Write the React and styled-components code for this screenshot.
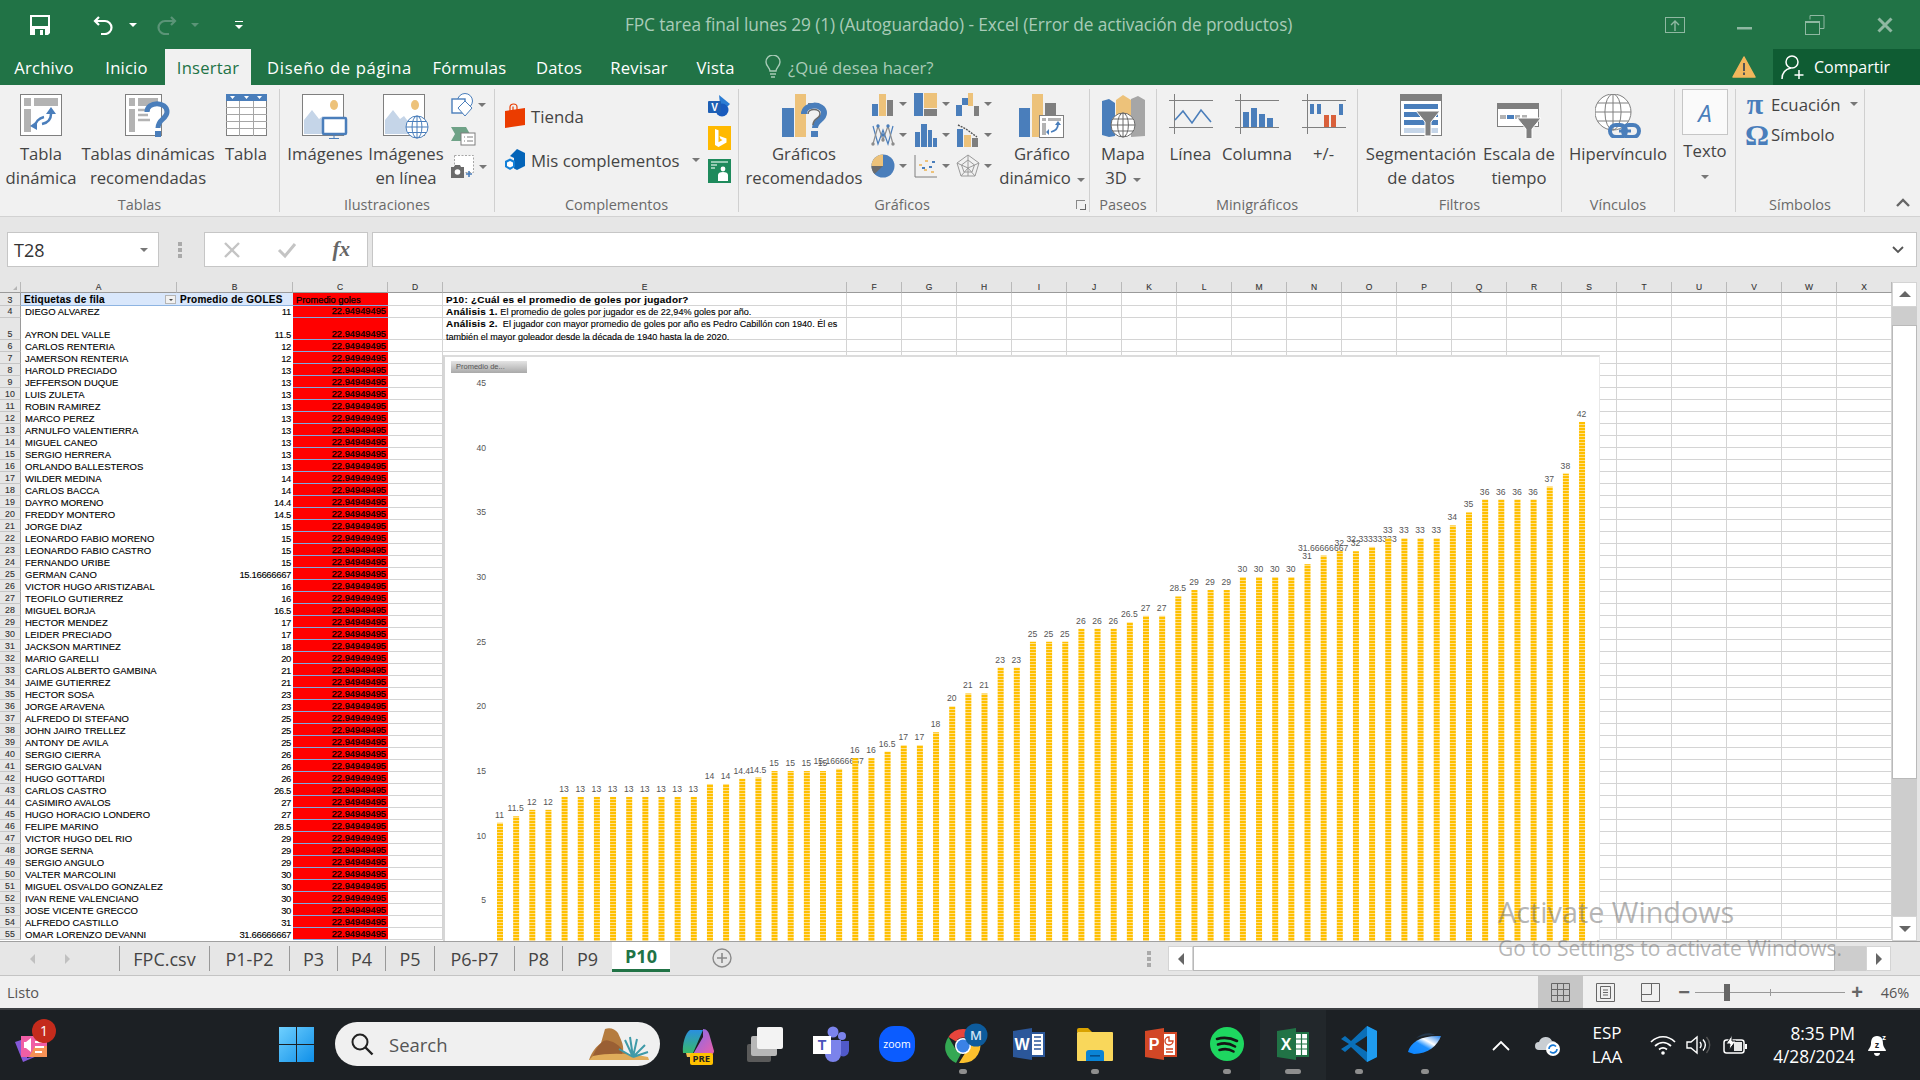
import styled, { createGlobalStyle, css } from "styled-components";

const UI = `"Open Sans", "Noto Sans", sans-serif`;
const CELL = `"Liberation Sans", Arial, sans-serif`;
const BLUE = "#4a7ebb";
const TAN = "#edc27a";
const GRAY = "#7f7f7f";

const TABS = [
	["Archivo", 88],
	["Inicio", 77],
	["Insertar", 86],
	["Diseño de página", 177, 0.7],
	["Fórmulas", 83],
	["Datos", 96],
	["Revisar", 64],
	["Vista", 89],
];
const COLUMNS = ["A", "B", "C", "D", "E", "F", "G", "H", "I", "J", "K", "L", "M", "N", "O", "P", "Q", "R", "S", "T", "U", "V", "W", "X"];
const SHEETS = [
	["FPC.csv", 90],
	["P1-P2", 80],
	["P3", 48],
	["P4", 48],
	["P5", 49],
	["P6-P7", 80],
	["P8", 48],
	["P9", 50],
];

const PLAYERS = [
	["DIEGO ALVAREZ", "11"],
	["AYRON DEL VALLE", "11.5"],
	["CARLOS RENTERIA", "12"],
	["JAMERSON RENTERIA", "12"],
	["HAROLD PRECIADO", "13"],
	["JEFFERSON DUQUE", "13"],
	["LUIS ZULETA", "13"],
	["ROBIN RAMIREZ", "13"],
	["MARCO PEREZ", "13"],
	["ARNULFO VALENTIERRA", "13"],
	["MIGUEL CANEO", "13"],
	["SERGIO HERRERA", "13"],
	["ORLANDO BALLESTEROS", "13"],
	["WILDER MEDINA", "14"],
	["CARLOS BACCA", "14"],
	["DAYRO MORENO", "14.4"],
	["FREDDY MONTERO", "14.5"],
	["JORGE DIAZ", "15"],
	["LEONARDO FABIO MORENO", "15"],
	["LEONARDO FABIO CASTRO", "15"],
	["FERNANDO URIBE", "15"],
	["GERMAN CANO", "15.16666667"],
	["VICTOR HUGO ARISTIZABAL", "16"],
	["TEOFILO GUTIERREZ", "16"],
	["MIGUEL BORJA", "16.5"],
	["HECTOR MENDEZ", "17"],
	["LEIDER PRECIADO", "17"],
	["JACKSON MARTINEZ", "18"],
	["MARIO GARELLI", "20"],
	["CARLOS ALBERTO GAMBINA", "21"],
	["JAIME GUTIERREZ", "21"],
	["HECTOR SOSA", "23"],
	["JORGE ARAVENA", "23"],
	["ALFREDO DI STEFANO", "25"],
	["JOHN JAIRO TRELLEZ", "25"],
	["ANTONY DE AVILA", "25"],
	["SERGIO CIERRA", "26"],
	["SERGIO GALVAN", "26"],
	["HUGO GOTTARDI", "26"],
	["CARLOS CASTRO", "26.5"],
	["CASIMIRO AVALOS", "27"],
	["HUGO HORACIO LONDERO", "27"],
	["FELIPE MARINO", "28.5"],
	["VICTOR HUGO DEL RIO", "29"],
	["JORGE SERNA", "29"],
	["SERGIO ANGULO", "29"],
	["VALTER MARCOLINI", "30"],
	["MIGUEL OSVALDO GONZALEZ", "30"],
	["IVAN RENE VALENCIANO", "30"],
	["JOSE VICENTE GRECCO", "30"],
	["ALFREDO CASTILLO", "31"],
	["OMAR LORENZO DEVANNI", "31.66666667"],
];

const BARS = [
	...PLAYERS.map((p) => p[1]),
	"32", "32", "32.33333333", "33", "33", "33", "33", "34", "35", "36", "36", "36", "36", "37", "38", "42",
];

// small helpers for the drawn ribbon icons
const Svg = ({ w, h, children }) => (
	<svg width={w} height={h} viewBox={`0 0 ${w} ${h}`}>
		{children}
	</svg>
);

const Globe = ({ cx, cy, r, color = "#808080", fill = "#fff" }) => (
	<g fill="none" stroke={color} strokeWidth="1">
		<circle cx={cx} cy={cy} r={r} fill={fill} />
		<ellipse cx={cx} cy={cy} rx={r * 0.45} ry={r} />
		<path d={`M${cx} ${cy - r}V${cy + r}M${cx - r} ${cy}H${cx + r}M${cx - r * 0.85} ${cy - r * 0.5}H${cx + r * 0.85}M${cx - r * 0.85} ${cy + r * 0.5}H${cx + r * 0.85}`} />
	</g>
);

const PivotIcon = () => (
	<Svg w={42} h={42}>
		<rect x=".5" y=".5" width="41" height="41" fill="#fff" stroke={GRAY} />
		<path d="M4 4h7v8H4zM14 4h24v8H14zM4 15h7v23H4z" fill="#b3b3b3" />
		<path d="M31 20c0 6-4 9-9 10M15 33c0-5 4-9 9-10" fill="none" stroke={BLUE} strokeWidth="2.5" />
		<path d="M31 13l5 7h-10zM17 36l-7-4 7-5z" fill={BLUE} />
	</Svg>
);

const RecommendedPivotIcon = () => (
	<Svg w={46} h={44}>
		<rect x=".5" y=".5" width="36" height="41" fill="#fff" stroke={GRAY} />
		<path d="M4 4h6v8H4zM13 4h20v8H13zM4 15h6v23H4z" fill="#b3b3b3" />
		<path d="M13 16h12M13 21h10M13 26h12" stroke="#b3b3b3" strokeWidth="2.5" />
		<path d="M22 18c0-11 20-11 20 0 0 7-9 7-9 16" fill="none" stroke={BLUE} strokeWidth="5" />
		<rect x="30" y="37" width="6" height="6" fill={BLUE} />
	</Svg>
);

const TableIcon = () => (
	<Svg w={41} h={42}>
		<rect x=".5" y=".5" width="40" height="41" fill="#fff" stroke={GRAY} />
		<rect width="41" height="7" fill={BLUE} />
		<path d="M4 2h5l-2.500 3zM18 2h5l-2.500 3zM31 2h5l-2.500 3z" fill="#fff" />
		<path d="M0 13.500h41M0 20.500h41M0 27.500h41M0 34.500h41M13.500 7v35M27.500 7v35" stroke="#a6a6a6" />
	</Svg>
);

const PictureBase = () => (
	<>
		<rect x=".5" y=".5" width="41" height="41" fill="#fff" stroke={GRAY} />
		<ellipse cx="32" cy="11" rx="4" ry="5" fill={TAN} />
		<path d="M2 40V26l8-10 7 9 4-3 6 8v10z" fill="#c5d5e8" />
	</>
);

const PicturesIcon = () => (
	<Svg w={46} h={46}>
		<PictureBase />
		<rect x="21" y="24" width="23" height="16" rx="1" fill="#fff" stroke={BLUE} strokeWidth="2.5" />
		<path d="M32 41v3M27 44.500h10" stroke={BLUE} />
	</Svg>
);

const OnlinePicturesIcon = () => (
	<Svg w={46} h={46}>
		<PictureBase />
		<Globe cx={34} cy={33} r={11} color={BLUE} />
	</Svg>
);

const ShapesIcon = () => (
	<Svg w={24} h={24}>
		<circle cx="14" cy="8" r="7.500" fill="#fff" stroke={BLUE} />
		<rect x="1" y="6" width="13" height="14" fill="#fff" stroke={BLUE} strokeWidth="1.4" />
		<path d="M14 8l7 7-7 8-7-8z" fill="#fff" stroke={BLUE} />
	</Svg>
);

const SmartArtIcon = () => (
	<Svg w={25} h={20}>
		<path d="M0 1h15l4 7-4 7H0l4-7z" fill="#6fa287" />
		<rect x="10" y="7" width="14" height="12" fill="#fff" stroke={GRAY} />
		<path d="M13 11h1M16 11h6M13 15h1M16 15h6" stroke={GRAY} />
	</Svg>
);

const ScreenshotIcon = () => (
	<Svg w={25} h={24}>
		<rect x="3.500" y=".5" width="19" height="17" fill="#fff" stroke="#a6a6a6" strokeDasharray="2 1.5" />
		<path d="M0 12h3l1-2h5l1 2h3v11H0z" fill="#6b6b6b" />
		<circle cx="6.500" cy="17" r="2.800" fill="#fff" />
		<path d="M18 16v6M15 19h6" stroke={BLUE} strokeWidth="1.6" />
	</Svg>
);

const StoreIcon = () => (
	<Svg w={21} h={26}>
		<path d="M0 8l20-3v17L0 25z" fill="#eb3c00" />
		<path d="M5 8V4c0-4 7-4 7 0v3M8 7V3.500" fill="none" stroke="#eb3c00" strokeWidth="1.2" />
	</Svg>
);

const AddinsIcon = () => (
	<Svg w={21} h={22}>
		<path d="M12 0l8 4v13l-8 4-3-1.500V9L5 7z" fill="#0364b8" />
		<path d="M5 9.500l5 2.500v6l-5 3-5-3v-6z" fill="#1380d8" />
		<path d="M5 12l3 1.500v3.500l-3 1.500-3-1.500v-3.500z" fill="#fff" />
	</Svg>
);

const VisioIcon = () => (
	<Svg w={23} h={22}>
		<path d="M11 0l11 9-9 9z" fill="#2b7cd3" />
		<circle cx="14" cy="15" r="6.500" fill="#185abd" />
		<rect y="6" width="13" height="12" rx="1" fill="#1e5fb4" />
		<text x="6.500" y="16" fill="#fff" fontFamily={CELL} fontWeight="700" fontSize="10" textAnchor="middle">V</text>
	</Svg>
);

const BingIcon = () => (
	<Svg w={23} h={24}>
		<rect width="23" height="24" fill="#ffb900" />
		<path d="M7 3l3.500 1.200v12l4-2.200-2-1-1-3 7 2.400v4L10.500 21 7 19z" fill="#fff" />
	</Svg>
);

const PeopleGraphIcon = () => (
	<Svg w={23} h={24}>
		<rect width="23" height="24" fill="#1e8a5c" />
		<path d="M3 3h17M3 6h6M3 9h4" stroke="#b9e0cd" strokeWidth="1.4" />
		<circle cx="15" cy="10" r="2.400" fill="#fff" />
		<path d="M10 22v-6c0-2 2-3 5-3s5 1 5 3v6z" fill="#fff" />
	</Svg>
);

const RecommendedChartIcon = () => (
	<Svg w={45} h={44}>
		<rect y="14" width="12" height="29" fill={BLUE} />
		<rect x="13" y="0" width="11" height="43" fill={TAN} />
		<rect x="26" y="9" width="11" height="4" fill={GRAY} />
		<path d="M22 20c0-11 20-11 20-1 0 7-9 7-9 15" fill="none" stroke={BLUE} strokeWidth="6" />
		<path d="M26 20c0-6 12-6 12 0 0 5-7 4-7 11" fill="none" stroke="#6b6b6b" strokeWidth="1.5" />
		<rect x="29" y="37" width="7" height="6" fill={BLUE} />
	</Svg>
);

const ColumnMini = () => (
	<Svg w={24} h={24}>
		<rect x="1" y="12" width="6" height="12" fill={BLUE} />
		<rect x="8" y="2" width="7" height="22" fill={TAN} />
		<rect x="16" y="8" width="6" height="16" fill={GRAY} />
	</Svg>
);

const TreemapMini = () => (
	<Svg w={24} h={24}>
		<rect x="0" y="1" width="9" height="23" fill={BLUE} />
		<rect x="10" y="1" width="13" height="15" fill={TAN} />
		<rect x="10" y="17" width="13" height="7" fill={GRAY} />
	</Svg>
);

const WaterfallMini = () => (
	<Svg w={24} h={24}>
		<path d="M0 13h6v11H0zM6 6h6v7H6z" fill={BLUE} />
		<rect x="12" y="1" width="5" height="13" fill={TAN} />
		<rect x="18" y="14" width="5" height="10" fill={GRAY} />
	</Svg>
);

const FunnelMini = () => (
	<Svg w={24} h={24}>
		<path d="M2 3l5 18 5-14 5 14 5-18" fill="none" stroke={BLUE} strokeWidth="1.2" />
		<path d="M2 21l5-18 5 14 5-14 5 18" fill="none" stroke="#8c8c8c" strokeWidth="1.2" />
		<g fill={BLUE}>
			<circle cx="7" cy="3" r="1.700" />
			<circle cx="17" cy="3" r="1.700" />
			<circle cx="12" cy="12" r="1.700" />
		</g>
		<g fill="#8c8c8c">
			<circle cx="2" cy="21" r="1.700" />
			<circle cx="22" cy="21" r="1.700" />
			<circle cx="12" cy="17" r="1.700" />
		</g>
	</Svg>
);

const HistogramMini = () => (
	<Svg w={24} h={24}>
		<path d="M1 9h5v15H1zM7 1h6v23H7zM14 7h4v17h-4zM19 15h4v9h-4z" fill={BLUE} />
	</Svg>
);

const ParetoMini = () => (
	<Svg w={24} h={24}>
		<rect x="1" y="6" width="6" height="18" fill={BLUE} />
		<rect x="8" y="12" width="7" height="12" fill={TAN} />
		<rect x="16" y="15" width="6" height="9" fill={GRAY} />
		<path d="M2 2l8 4 11 8" fill="none" stroke="#555" strokeDasharray="2 1" strokeWidth="1.4" />
	</Svg>
);

const PieMini = () => (
	<Svg w={24} h={26}>
		<circle cx="12" cy="13" r="11.500" fill={BLUE} />
		<path d="M12 13H0.500A11.500 11.500 0 0 1 12 1.500z" fill={TAN} />
		<path d="M12 13L3.500 21A11.500 11.500 0 0 1 0.500 13z" fill="#6b6b6b" />
	</Svg>
);

const ScatterMini = () => (
	<Svg w={24} h={24}>
		<path d="M1 1v22h22" fill="none" stroke={GRAY} />
		<path d="M5 10h3v2H5zM11 6h3v2h-3zM10 15h3v2h-3zM17 17h3v2h-3z" fill={TAN} />
		<path d="M8 13h3v2H8zM18 7h3v2h-3zM15 12h3v2h-3z" fill={BLUE} />
	</Svg>
);

const RadarMini = () => (
	<Svg w={24} h={24}>
		<g fill="none" stroke="#9a9a9a" strokeWidth="1">
			<path d="M12 1l11 8-4 13H5L1 9z" />
			<path d="M12 6l6.500 5-2.500 7H8l-2.500-7z" />
			<path d="M12 1v21M1 9l11 5 11-5M5 22l7-8 7 8" />
		</g>
	</Svg>
);

const PivotChartIcon = () => (
	<Svg w={46} h={44}>
		<rect y="14" width="11" height="29" fill={BLUE} />
		<rect x="13" y="0" width="11" height="43" fill={TAN} />
		<rect x="26" y="9" width="11" height="16" fill={GRAY} />
		<rect x="20.500" y="21.500" width="24" height="22" fill="#fff" stroke={GRAY} />
		<path d="M23 24h4v3h-4zM29 24h13v3H29zM23 29h4v12h-4z" fill="#b3b3b3" />
		<path d="M39 30c0 4-3 7-7 8" fill="none" stroke={BLUE} strokeWidth="1.8" />
		<path d="M39 27l3 4h-6zM30 41v-6l-3 3z" fill={BLUE} />
	</Svg>
);

const Map3DIcon = () => (
	<Svg w={43} h={44}>
		<path d="M0 7l7-2 6 4v33l-6 1-7-2z" fill={BLUE} />
		<path d="M14 6l7-5 8 5v32H14z" fill={TAN} />
		<path d="M29 5l7-3 7 4v36l-14 1z" fill="#a6a6a6" />
		<Globe cx={21} cy={31} r={12} color="#6b6b6b" />
	</Svg>
);

const SparkFrame = ({ children }) => (
	<Svg w={44} h={41}>
		<path d="M0 6.500h44M0 33.500h44M5.500 0v40" stroke={GRAY} />
		{children}
	</Svg>
);

const LineSparkIcon = () => (
	<SparkFrame>
		<path d="M6 26l8-9 9 12 9-13 10 12" fill="none" stroke={BLUE} strokeWidth="1.6" />
	</SparkFrame>
);

const ColumnSparkIcon = () => (
	<SparkFrame>
		<path d="M8 18h6v15H8zM16 14h6v19h-6zM24 20h6v13h-6zM32 24h6v9h-6z" fill={BLUE} />
	</SparkFrame>
);

const WinLossIcon = () => (
	<SparkFrame>
		<path d="M8 10h4v10H8zM15 10h4v10h-4zM37 10h4v11h-4z" fill={BLUE} />
		<path d="M22 21h5v12h-5zM29 21h5v12h-5z" fill="#d9603b" />
	</SparkFrame>
);

const SlicerIcon = () => (
	<Svg w={42} h={43}>
		<rect x=".5" y=".5" width="41" height="41" fill="#fff" stroke={GRAY} />
		<rect width="42" height="7" fill={GRAY} />
		<path d="M4 10h34v5H4zM4 18h34v5H4zM4 26h34v5H4z" fill={BLUE} />
		<rect x="4" y="34" width="34" height="5" fill="#c5d5e8" />
		<path d="M16 17h24l-9 11v14h-6V28z" fill="#7f7f7f" stroke="#fff" />
	</Svg>
);

const TimelineIcon = () => (
	<Svg w={44} h={44}>
		<g transform="translate(0 9)">
			<rect x=".5" y=".5" width="41" height="23" fill="#fff" stroke={GRAY} />
			<rect width="42" height="6" fill={GRAY} />
			<path d="M3 12h6v4H3zM18 12h5v4h-5zM25 12h5v4h-5z" fill="#b3b3b3" />
			<path d="M10 12h7v4h-7z" fill={BLUE} />
			<path d="M20 15h24l-9 11v10h-6V26z" fill="#7f7f7f" stroke="#fff" />
		</g>
	</Svg>
);

const LinkIcon = () => (
	<Svg w={46} h={44}>
		<Globe cx={18} cy={18} r={18} />
		<rect x="15" y="31" width="16" height="12" rx="6" fill="none" stroke={BLUE} strokeWidth="4" />
		<rect x="28" y="31" width="16" height="12" rx="6" fill="none" stroke={BLUE} strokeWidth="4" />
		<path d="M24 37h12" stroke={BLUE} strokeWidth="3" />
	</Svg>
);

const SaveIcon = () => (
	<Svg w={20} h={20}>
		<path d="M0 0h20v18l-2 2H0z" fill="#fff" />
		<rect x="2" y="2" width="16" height="9" fill="#217346" />
		<rect x="5" y="14" width="10" height="6" fill="#217346" />
		<rect x="10" y="15" width="3" height="5" fill="#fff" />
	</Svg>
);

const UndoIcon = ({ dim }) => (
	<Svg w={22} h={20}>
		<path d="M6 2L2 6l4 4M2 6h10a6.500 6.500 0 0 1 0 13H8" fill="none" stroke={dim ? "#5b9477" : "#fff"} strokeWidth="2.2" transform={dim ? "matrix(-1 0 0 1 22 0)" : undefined} />
	</Svg>
);

const WindowsLogo = () => (
	<Svg w={35} h={35}>
		<defs>
			<linearGradient id="winTile" x1="0" y1="0" x2="1" y2="1">
				<stop offset="0" stopColor="#6fd0ff" />
				<stop offset="1" stopColor="#0f8fe8" />
			</linearGradient>
		</defs>
		<path d="M0 0h17v17H0zM18 0h17v17H18zM0 18h17v17H0zM18 18h17v17H18z" fill="url(#winTile)" />
	</Svg>
);

const DesertArt = () => (
	<Svg w={61} h={33}>
		<path d="M0 32c3-9 8-14 12-17l4-14c5-2 10 0 13 4 3 7 6 12 5 18l14 9z" fill="#b57c3f" />
		<path d="M12 15c5-5 8-2 12-1 4 2 8 5 10 9l-3 8H3c2-7 5-12 9-16z" fill="#9a5f34" />
		<path d="M4 28c15-3 35-3 55 1l1 3H0z" fill="#e0ac5a" />
		<path d="M44 29L36 12M44 29l-3-20M44 29l4-18M44 29l12-12M44 29L30 21M44 29l15-5" stroke="#3f9aa8" strokeWidth="2" />
	</Svg>
);

const CopilotIcon = () => (
	<Svg w={35} h={35}>
		<defs>
			<linearGradient id="copA" x1="0" y1="0" x2="0" y2="1">
				<stop offset="0" stopColor="#2a8fe0" />
				<stop offset="1" stopColor="#38b96a" />
			</linearGradient>
			<linearGradient id="copB" x1="0" y1="0" x2="1" y2="1">
				<stop offset="0" stopColor="#7b6cf0" />
				<stop offset="1" stopColor="#ef5fa7" />
			</linearGradient>
		</defs>
		<path d="M8 3h13L11 26H1c-1-8 2-20 7-23z" fill="url(#copA)" />
		<path d="M21 2c4 0 6 3 7 8l4 14c0 3-3 5-8 5H10L21 10z" fill="url(#copB)" />
		<path d="M4 26h12l-3 4H5z" fill="#f2c14e" />
	</Svg>
);

const TaskViewIcon = () => (
	<Svg w={36} h={36}>
		<rect y="18" width="24" height="18" rx="2" fill="#5a5a5a" />
		<rect x="4" y="10" width="26" height="20" rx="2" fill="#b8b8b8" />
		<rect x="10" y="1" width="26" height="22" rx="2" fill="#f3f3f3" />
	</Svg>
);

const TeamsIcon = () => (
	<Svg w={37} h={36}>
		<circle cx="29" cy="10" r="4" fill="#7b83eb" />
		<circle cx="20" cy="6" r="5.500" fill="#7b83eb" />
		<path d="M25 15h11v10a6 6 0 0 1-8 5z" fill="#5059c9" />
		<path d="M12 14h16v14a8 8 0 0 1-16 0z" fill="#7b83eb" />
		<rect y="10" width="18" height="18" fill="#fff" />
		<text x="9" y="24" fill="#4b53bc" fontFamily={CELL} fontWeight="700" fontSize="14" textAnchor="middle">T</text>
	</Svg>
);

const ZoomIcon = () => (
	<Svg w={36} h={36}>
		<rect width="36" height="36" rx="15" fill="#0b5cff" />
		<text x="18" y="22" fill="#fff" fontFamily={UI} fontSize="10.500" textAnchor="middle">zoom</text>
	</Svg>
);

const ChromeIcon = () => (
	<Svg w={48} h={42}>
		<path d="M18 6a17 17 0 0 1 15 8.500H18a8 8 0 0 0-7 4L3.500 14A17 17 0 0 1 18 6z" fill="#e8453c" />
		<path d="M3.500 14L11 27a8 8 0 0 0 7 0l-7 13A17 17 0 0 1 3.500 14z" fill="#34a853" />
		<path d="M33 14.500A17 17 0 0 1 18 40h-4l8-13a8 8 0 0 0 3-12.500z" fill="#fbc02d" />
		<circle cx="18" cy="23" r="8" fill="#fff" />
		<circle cx="18" cy="23" r="6.500" fill="#3b82e6" />
		<circle cx="31" cy="12" r="11.500" fill="#0d5b9c" />
		<text x="31" y="17" fill="#cfe3f5" fontFamily={UI} fontWeight="600" fontSize="13" textAnchor="middle">M</text>
	</Svg>
);

// word, powerpoint and excel share the book + page shape
const OfficeIcon = ({ color, letter, page }) => (
	<Svg w={32} h={32}>
		<path d="M0 3l19-3v32L0 29z" fill={color} />
		<rect x="17" y="4" width="15" height="25" fill={color} />
		<rect x="19" y="6" width="11" height="21" fill="#fff" />
		{page}
		<text x="9" y="22" fill="#fff" fontFamily={CELL} fontWeight="700" fontSize="16" textAnchor="middle">{letter}</text>
	</Svg>
);

const FolderIcon = () => (
	<Svg w={36} h={33}>
		<path d="M0 2a2 2 0 0 1 2-2h9l4 4h-15z" fill="#d9a200" />
		<rect y="4" width="36" height="29" rx="1" fill="#f9d75b" />
		<path d="M9 33v-8a3 3 0 0 1 3-3h12a3 3 0 0 1 3 3v8z" fill="#0a84d6" />
		<rect x="13" y="27" width="10" height="1.600" fill="#054f8c" />
	</Svg>
);

const SpotifyIcon = () => (
	<Svg w={34} h={34}>
		<circle cx="17" cy="17" r="17" fill="#1ed760" />
		<path d="M7 12c7-2 14-1 20 2M8 17.500c6-2 12-1 17 2M9.500 23c5-1.500 10-1 14 1.500" fill="none" stroke="#151515" strokeWidth="2.6" strokeLinecap="round" />
	</Svg>
);

const VsCodeIcon = () => (
	<Svg w={36} h={36}>
		<path d="M26 0l10 5v26l-10 5L10 21l-6 5-4-3 8-5-8-5 4-3 6 5z" fill="#0a6fb8" />
		<path d="M26 0l10 5v26l-10 5z" fill="#1f9cf0" />
		<path d="M26 10L14 18l12 8z" fill="#1d2125" />
	</Svg>
);

const SwooshIcon = () => (
	<Svg w={34} h={24}>
		<defs>
			<linearGradient id="swoosh" x1="0" y1="1" x2="1" y2="0">
				<stop offset="0" stopColor="#0a84ff" />
				<stop offset=".45" stopColor="#1e90ff" />
				<stop offset=".65" stopColor="#ffffff" />
				<stop offset="1" stopColor="#1f7de8" />
			</linearGradient>
		</defs>
		<path d="M0 20C2 10 14 3 33 4 30 13 20 22 6 22z" fill="url(#swoosh)" />
		<path d="M8 6c6-5 14-6 19-3-7 0-13 1-19 3z" fill="#23364a" />
	</Svg>
);

const CloudSyncIcon = () => (
	<Svg w={26} h={22}>
		<path d="M4 16a4 4 0 0 1 0-8 7 7 0 0 1 13-1 5 5 0 0 1 3 9z" fill="#c9ced3" />
		<circle cx="18" cy="15" r="7" fill="#fff" />
		<path d="M14 15a4 4 0 0 1 7-2.500M22 15a4 4 0 0 1-7 2.500" fill="none" stroke="#1577d4" strokeWidth="1.6" />
	</Svg>
);

const WifiIcon = () => (
	<Svg w={26} h={20}>
		<path d="M1 7c7-7 17-7 24 0M5 11c5-4.500 11-4.500 16 0M9 14.500c2.500-2 5.500-2 8 0" fill="none" stroke="#fff" strokeWidth="1.7" />
		<circle cx="13" cy="18" r="1.800" fill="#fff" />
	</Svg>
);

const SpeakerIcon = () => (
	<Svg w={25} h={20}>
		<path d="M1 7h4l6-5v16l-6-5H1z" fill="none" stroke="#fff" strokeWidth="1.4" />
		<path d="M14 7c1.500 2 1.500 4 0 6M17 4.500c3 3.500 3 7.500 0 11" fill="none" stroke="#fff" strokeWidth="1.4" />
		<path d="M20.500 2c4 5 4 11 0 16" fill="none" stroke="#555" strokeWidth="1.400" />
	</Svg>
);

const BatteryIcon = () => (
	<Svg w={25} h={20}>
		<rect x="1" y="5" width="20" height="13" rx="2.500" fill="none" stroke="#fff" strokeWidth="1.5" />
		<rect x="22" y="9" width="2" height="5" fill="#fff" />
		<path d="M9 0L3 9h4l-1 6 7-9H9z" fill="#fff" stroke="#1d2125" />
		<rect x="11" y="7" width="8" height="9" fill="#fff" opacity=".9" />
	</Svg>
);

const BellIcon = () => (
	<Svg w={22} h={24}>
		<path d="M10 3c-5 0-6 4-6 8 0 3-3 5-3 7h18c0-2-3-4-3-7 0-4-1-8-6-8z" fill="#fff" />
		<path d="M7 20h6c0 4-6 4-6 0z" fill="#fff" />
		<text x="10" y="15" fill="#1d2125" fontFamily={CELL} fontWeight="700" fontSize="9" textAnchor="middle">z</text>
		<text x="17" y="7" fill="#fff" fontFamily={CELL} fontWeight="700" fontSize="8" textAnchor="middle">z</text>
	</Svg>
);

const NotifyAppIcon = () => (
	<Svg w={34} h={44}>
		<path d="M0 24l12-4v20l10-2-14 6z" fill="#8458d8" />
		<path d="M6 18h24a2 2 0 0 1 2 2v17a2 2 0 0 1-2 2H6z" fill="#f05ea5" />
		<path d="M20 28h12v11H14z" fill="#f79256" />
		<path d="M11 24l5-4v14l-5-4H9v-6z" fill="#fff" />
		<path d="M20 24h7M20 29h9M20 34h7" stroke="#fff" strokeWidth="2" />
	</Svg>
);

const ChartOverlay = () => {
	const height = 585;
	// 2px less than the sheet coords because of the chart's top border
	const toY = (v) => 608 - v * 12.93;
	return (
		<ChartArea>
			<svg width="1155" height={height} viewBox={`0 0 1155 ${height}`}>
				<defs>
					<pattern id="barStripes" width="6" height="3" patternUnits="userSpaceOnUse">
						<rect width="6" height="3" fill="#ffc000" />
						<rect y="1" width="6" height="1" fill="#ffe08a" />
					</pattern>
				</defs>
				{[45, 40, 35, 30, 25, 20, 15, 10, 5].map((tick) => (
					<text key={tick} x="41" y={toY(tick) + 3} fill="#555" fontFamily={CELL} fontSize="8.6" textAnchor="end">
						{tick}
					</text>
				))}
				{BARS.map((bar, i) => {
					const v = Number(bar);
					const x = 52 + i * 16.15;
					return (
						<g key={i}>
							<rect x={x} y={toY(v)} width="6" height={height - toY(v)} fill="url(#barStripes)" />
							<text x={x + 2.5} y={toY(v) - 5} fill="#555" fontFamily={CELL} fontSize="8.6" textAnchor="middle">
								{bar}
							</text>
						</g>
					);
				})}
			</svg>
			<ChartFieldButton>Promedio de...</ChartFieldButton>
		</ChartArea>
	);
};

function App() {
	return (
		<>
			<GlobalStyle />
			<Page>
				<TitleBar>
					<TitleRow>
						<QuickAccess>
							<SaveIcon />
							<UndoSlot><UndoIcon /></UndoSlot>
							<Caret $color="#fff" />
							<UndoSlot $gap={18}><UndoIcon dim /></UndoSlot>
							<Caret $color="#5b9477" />
							<CustomizeMark />
						</QuickAccess>
						<WindowTitle>FPC tarea final lunes 29 (1) (Autoguardado) - Excel (Error de activación de productos)</WindowTitle>
						<WindowControls>
							<svg width="20" height="16" viewBox="0 0 20 16">
								<rect x=".5" y=".5" width="19" height="15" fill="none" stroke="#8fb8a2" />
								<path d="M10 14V5M6 8l4-4 4 4" fill="none" stroke="#8fb8a2" strokeWidth="1.4" />
							</svg>
							<svg width="16" height="16" viewBox="0 0 16 16">
								<rect y="10" width="15" height="2.500" fill="#8fb8a2" />
							</svg>
							<svg width="20" height="20" viewBox="0 0 20 20">
								<path d="M5 4.500V.5h14v13h-4" fill="none" stroke="#8fb8a2" />
								<rect x=".5" y="6.500" width="14" height="13" fill="none" stroke="#8fb8a2" />
								<path d="M0 7h15" stroke="#8fb8a2" strokeWidth="2" />
							</svg>
							<svg width="16" height="16" viewBox="0 0 16 16">
								<path d="M1.500 1.500l13 13M14.500 1.500l-13 13" stroke="#8fb8a2" strokeWidth="3" />
							</svg>
						</WindowControls>
					</TitleRow>
					<TabRow>
						{TABS.map(([tab, width, spacing]) => (
							<RibbonTab key={tab} $w={width} $spacing={spacing} $active={tab === "Insertar"}>{tab}</RibbonTab>
						))}
						<TellMe>
							<svg width="16" height="24" viewBox="0 0 16 24">
								<path d="M5 16c0-3-4-5-4-9a7 7 0 0 1 14 0c0 4-4 6-4 9z" fill="none" stroke="#a8cbb7" strokeWidth="1.4" />
								<path d="M5 19h6M6 22h4" stroke="#a8cbb7" strokeWidth="1.6" />
							</svg>
							¿Qué desea hacer?
						</TellMe>
						<TabRowEnd>
							<svg width="24" height="22" viewBox="0 0 24 22">
								<path d="M12 1l11 20H1z" fill="#f2b75c" stroke="#f2b75c" strokeWidth="1.500" strokeLinejoin="round" />
								<path d="M12 7v8M12 16.500v2.500" stroke="#555" strokeWidth="2" />
							</svg>
							<ShareButton>
								<svg width="24" height="26" viewBox="0 0 24 26">
									<circle cx="11" cy="8" r="6" fill="none" stroke="#fff" strokeWidth="1.5" />
									<path d="M1 25c0-7 4-10 9-11M18 16v9M13.500 21h9" fill="none" stroke="#fff" strokeWidth="1.5" />
								</svg>
								Compartir
							</ShareButton>
						</TabRowEnd>
					</TabRow>
				</TitleBar>

				<Ribbon>
					<Group $w={280}>
						<GroupBody>
							<BigButton $w={82}><IconSlot><PivotIcon /></IconSlot><BigLabel>Tabla<br />dinámica</BigLabel></BigButton>
							<BigButton $w={132}><IconSlot><RecommendedPivotIcon /></IconSlot><BigLabel>Tablas dinámicas<br />recomendadas</BigLabel></BigButton>
							<BigButton $w={64}><IconSlot><TableIcon /></IconSlot><BigLabel>Tabla</BigLabel></BigButton>
						</GroupBody>
						<GroupLabel>Tablas</GroupLabel>
					</Group>
					<Group $w={215}>
						<GroupBody>
							<BigButton $w={90}><IconSlot><PicturesIcon /></IconSlot><BigLabel>Imágenes</BigLabel></BigButton>
							<BigButton $w={72}><IconSlot><OnlinePicturesIcon /></IconSlot><BigLabel>Imágenes<br />en línea</BigLabel></BigButton>
							<IconStack>
								<IconStackRow><ShapesIcon /><Caret /></IconStackRow>
								<IconStackRow><SmartArtIcon /></IconStackRow>
								<IconStackRow><ScreenshotIcon /><Caret /></IconStackRow>
							</IconStack>
						</GroupBody>
						<GroupLabel>Ilustraciones</GroupLabel>
					</Group>
					<Group $w={244}>
						<GroupBody>
							<AddinColumn>
								<AddinRow><StoreIcon />Tienda</AddinRow>
								<AddinRow><AddinsIcon />Mis complementos<Caret $left={7} /></AddinRow>
							</AddinColumn>
							<AddinIcons>
								<VisioIcon />
								<BingIcon />
								<PeopleGraphIcon />
							</AddinIcons>
						</GroupBody>
						<GroupLabel>Complementos</GroupLabel>
					</Group>
					<Group $w={351}>
						<GroupBody>
							<BigButton $w={130}><IconSlot><RecommendedChartIcon /></IconSlot><BigLabel>Gráficos<br />recomendados</BigLabel></BigButton>
							<ChartGrid>
								<ChartCell><ColumnMini /><Caret /></ChartCell>
								<ChartCell><TreemapMini /><Caret /></ChartCell>
								<ChartCell><WaterfallMini /><Caret /></ChartCell>
								<ChartCell><FunnelMini /><Caret /></ChartCell>
								<ChartCell><HistogramMini /><Caret /></ChartCell>
								<ChartCell><ParetoMini /><Caret /></ChartCell>
								<ChartCell><PieMini /><Caret /></ChartCell>
								<ChartCell><ScatterMini /><Caret /></ChartCell>
								<ChartCell><RadarMini /><Caret /></ChartCell>
							</ChartGrid>
							<BigButton $w={92}><IconSlot><PivotChartIcon /></IconSlot><BigLabel>Gráfico<br />dinámico<Caret $left={6} $inline /></BigLabel></BigButton>
						</GroupBody>
						<GroupLabel $shift={24}>Gráficos<DialogLauncher /></GroupLabel>
					</Group>
					<Group $w={67}>
						<GroupBody>
							<BigButton $w={66}><IconSlot><Map3DIcon /></IconSlot><BigLabel>Mapa<br />3D<Caret $left={6} $inline /></BigLabel></BigButton>
						</GroupBody>
						<GroupLabel>Paseos</GroupLabel>
					</Group>
					<Group $w={201}>
						<GroupBody>
							<BigButton $w={67}><IconSlot><LineSparkIcon /></IconSlot><BigLabel>Línea</BigLabel></BigButton>
							<BigButton $w={66}><IconSlot><ColumnSparkIcon /></IconSlot><BigLabel>Columna</BigLabel></BigButton>
							<BigButton $w={67}><IconSlot><WinLossIcon /></IconSlot><BigLabel>+/-</BigLabel></BigButton>
						</GroupBody>
						<GroupLabel>Minigráficos</GroupLabel>
					</Group>
					<Group $w={204}>
						<GroupBody>
							<BigButton $w={126}><IconSlot><SlicerIcon /></IconSlot><BigLabel>Segmentación<br />de datos</BigLabel></BigButton>
							<BigButton $w={70}><IconSlot><TimelineIcon /></IconSlot><BigLabel>Escala de<br />tiempo</BigLabel></BigButton>
						</GroupBody>
						<GroupLabel>Filtros</GroupLabel>
					</Group>
					<Group $w={113}>
						<GroupBody>
							<BigButton $w={112}><IconSlot><LinkIcon /></IconSlot><BigLabel>Hipervínculo</BigLabel></BigButton>
						</GroupBody>
						<GroupLabel>Vínculos</GroupLabel>
					</Group>
					<Group $w={61}>
						<GroupBody>
							<TextColumn>
								<TextBoxTile>A</TextBoxTile>
								<TextCaption>Texto</TextCaption>
								<Caret />
							</TextColumn>
						</GroupBody>
					</Group>
					<Group $w={129}>
						<GroupBody>
							<SymbolColumn>
								<SymbolRow><SymbolGlyph>π</SymbolGlyph>Ecuación<Caret $left={3} /></SymbolRow>
								<SymbolRow><SymbolGlyph>Ω</SymbolGlyph>Símbolo</SymbolRow>
							</SymbolColumn>
						</GroupBody>
						<GroupLabel>Símbolos</GroupLabel>
					</Group>
					<CollapseRibbon>
						<svg width="14" height="9" viewBox="0 0 14 9">
							<path d="M1 8l6-6 6 6" fill="none" stroke="#666" strokeWidth="2.400" />
						</svg>
					</CollapseRibbon>
				</Ribbon>

				<FormulaArea>
					<NameBox>T28<Caret $color="#777" /></NameBox>
					<GripDots />
					<FormulaButtons>
						<svg width="18" height="18" viewBox="0 0 18 18">
							<path d="M2 2l14 14M16 2L2 16" stroke="#c4c4c4" strokeWidth="2.400" />
						</svg>
						<svg width="20" height="18" viewBox="0 0 20 18">
							<path d="M2 9l6 6L18 3" fill="none" stroke="#c4c4c4" strokeWidth="3" />
						</svg>
						<FxMark>fx</FxMark>
					</FormulaButtons>
					<FormulaInput>
						<svg width="12" height="8" viewBox="0 0 12 8">
							<path d="M1 1l5 5 5-5" fill="none" stroke="#555" strokeWidth="1.800" />
						</svg>
					</FormulaInput>
				</FormulaArea>

				<SheetArea>
					<GridViewport>
						<GridRow $h={11}>
							<CornerCell />
							{COLUMNS.map((col) => (
								<ColumnHead key={col}>{col}</ColumnHead>
							))}
						</GridRow>

						<GridRow $h={13}>
							<RowHead>3</RowHead>
							<PivotHeadCell>
								Etiquetas de fila
								<FilterButton />
							</PivotHeadCell>
							<PivotHeadCell>Promedio de GOLES</PivotHeadCell>
							<RedCell $align="left">Promedio goles</RedCell>
							<EmptyCell />
							<NoteCell $top={1}><strong>P10: ¿Cuál es el promedio de goles por jugador?</strong></NoteCell>
							{Array.from({ length: 19 }, (_, i) => <EmptyCell key={i} />)}
						</GridRow>

						{PLAYERS.map(([name, goals], i) => {
							const tall = i === 1;
							const lift = i === 0;
							return (
								<GridRow key={name} $h={tall ? 22 : 12}>
									<RowHead $lift={lift}>{i + 4}</RowHead>
									<NameCell $lift={lift}>{name}</NameCell>
									<GoalCell $lift={lift}>{goals}</GoalCell>
									<RedCell $lift={lift}>22.94949495</RedCell>
									<EmptyCell />
									{i === 0 && <NoteCell><strong>Análisis 1.</strong> El promedio de goles por jugador es de 22,94% goles por año.</NoteCell>}
									{tall && (
										<NoteCell $wrap>
											<strong>Análisis 2.</strong> &nbsp;El jugador con mayor promedio de goles por año es Pedro Cabillón con 1940. Él es<br />
											también el mayor goleador desde la década de 1940 hasta la de 2020.
										</NoteCell>
									)}
									{i > 1 && <EmptyCell />}
									{Array.from({ length: 19 }, (_, k) => <EmptyCell key={k} />)}
								</GridRow>
							);
						})}
						<ChartOverlay />
					</GridViewport>
					<VerticalScroll>
						<ScrollButton><ArrowUp /></ScrollButton>
						<ScrollThumb />
						<ScrollButton><ArrowDown /></ScrollButton>
					</VerticalScroll>
				</SheetArea>

				<SheetTabsBar>
					<TabNav>
						<NavArrow $dir="left" />
						<NavArrow $dir="right" />
					</TabNav>
					{SHEETS.map(([sheet, width]) => (
						<SheetTab key={sheet} $w={width}>{sheet}</SheetTab>
					))}
					<ActiveSheetTab>P10</ActiveSheetTab>
					<AddSheet>
						<svg width="20" height="20" viewBox="0 0 20 20">
							<circle cx="10" cy="10" r="9" fill="none" stroke="#8a8a8a" strokeWidth="1.400" />
							<path d="M10 5v10M5 10h10" stroke="#8a8a8a" strokeWidth="1.600" />
						</svg>
					</AddSheet>
					<TabsGrip />
					<HorizontalScroll>
						<HScrollButton><ArrowLeft /></HScrollButton>
						<HScrollThumb />
						<HScrollButton $end><ArrowRight /></HScrollButton>
					</HorizontalScroll>
				</SheetTabsBar>

				<StatusBar>
					<StatusText>Listo</StatusText>
					<StatusRight>
						<ViewButton $active>
							<svg width="19" height="19" viewBox="0 0 19 19">
								<path d="M.5.500h18v18H.5zM6.500.500v18M12.500.500v18M.5 6.500h18M.5 12.500h18" fill="none" stroke="#666" />
							</svg>
						</ViewButton>
						<ViewButton>
							<svg width="19" height="19" viewBox="0 0 19 19">
								<path d="M.5.500h18v18H.5zM4.500 3.500h10v12h-10zM7 7h5M7 9.500h5M7 12h5" fill="none" stroke="#666" />
							</svg>
						</ViewButton>
						<ViewButton>
							<svg width="19" height="19" viewBox="0 0 19 19">
								<path d="M.5.500h18v18H.5zM.5 11.500h10M10.500.500v11" fill="none" stroke="#666" />
							</svg>
						</ViewButton>
						<ZoomControl>
							<ZoomSign>−</ZoomSign>
							<ZoomTrack><ZoomThumb /><ZoomTick /></ZoomTrack>
							<ZoomSign>+</ZoomSign>
						</ZoomControl>
						<ZoomValue>46%</ZoomValue>
					</StatusRight>
				</StatusBar>

				<Taskbar>
					<NotifySlot>
						<NotifyAppIcon />
						<NotifyBadge>1</NotifyBadge>
					</NotifySlot>
					<TaskSlot><WindowsLogo /></TaskSlot>
					<SearchPill>
						<svg width="24" height="24" viewBox="0 0 24 24">
							<circle cx="10" cy="10" r="7.500" fill="none" stroke="#222" strokeWidth="2" />
							<path d="M15.500 15.500l7 7" stroke="#222" strokeWidth="2.400" />
						</svg>
						<SearchText>Search</SearchText>
						<DesertArt />
					</SearchPill>
					<TaskSlot>
						<CopilotWrap>
							<CopilotIcon />
							<PreBadge>PRE</PreBadge>
						</CopilotWrap>
					</TaskSlot>
					<TaskSlot><TaskViewIcon /></TaskSlot>
					<TaskSlot><TeamsIcon /></TaskSlot>
					<TaskSlot><ZoomIcon /></TaskSlot>
					<TaskSlot $dot><ChromeWrap><ChromeIcon /></ChromeWrap></TaskSlot>
					<TaskSlot>
						<OfficeIcon color="#2b579a" letter="W" page={<path d="M21 9h7M21 13h7M21 17h7M21 21h7" stroke="#2b579a" strokeWidth="1.600" />} />
					</TaskSlot>
					<TaskSlot $dot><FolderIcon /></TaskSlot>
					<TaskSlot>
						<OfficeIcon color="#d24726" letter="P" page={<path d="M21 21h7M21 24h7M24 9a4 4 0 1 0 4 4h-4z" fill="none" stroke="#d24726" strokeWidth="1.400" />} />
					</TaskSlot>
					<TaskSlot $dot><SpotifyIcon /></TaskSlot>
					<TaskSlot $dot $wide $lit>
						<OfficeIcon color="#217346" letter="X" page={<path d="M19 11h11M19 16h11M19 21h11M24.500 6v21" stroke="#217346" strokeWidth="1.200" />} />
					</TaskSlot>
					<TaskSlot $dot><VsCodeIcon /></TaskSlot>
					<TaskSlot $dot><SwooshIcon /></TaskSlot>
					<SystemTray>
						<TrayIcon $w={30}>
							<svg width="18" height="11" viewBox="0 0 18 11">
								<path d="M1 10l8-8 8 8" fill="none" stroke="#fff" strokeWidth="1.800" />
							</svg>
						</TrayIcon>
						<TrayIcon $w={64}><CloudSyncIcon /></TrayIcon>
						<LangBlock>ESP<br />LAA</LangBlock>
						<TrayIcon $w={36}><WifiIcon /></TrayIcon>
						<TrayIcon $w={34}><SpeakerIcon /></TrayIcon>
						<TrayIcon $w={40}><BatteryIcon /></TrayIcon>
						<ClockBlock>8:35 PM<br />4/28/2024</ClockBlock>
						<TrayIcon $w={46}><BellIcon /></TrayIcon>
					</SystemTray>
				</Taskbar>

				<ActivateNote>
					<ActivateTitle>Activate Windows</ActivateTitle>
					<ActivateHint>Go to Settings to activate Windows.</ActivateHint>
				</ActivateNote>
			</Page>
		</>
	);
}

const GlobalStyle = createGlobalStyle`
	html, body {
		margin: 0;
		padding: 0;
		background: #fff;
		overflow: hidden;
	}
	* {
		box-sizing: border-box;
	}
	svg {
		display: block;
		flex: none;
	}
`;

const Page = styled.div`
	position: relative;
	display: flex;
	flex-direction: column;
	width: 1920px;
	height: 1080px;
	overflow: hidden;
	font-family: ${UI};
`;

const TitleBar = styled.header`
	height: 85px;
	background: #217346;
`;

const TitleRow = styled.div`
	position: relative;
	display: flex;
	align-items: center;
	height: 49px;
	padding-left: 30px;
`;

const QuickAccess = styled.div`
	display: flex;
	align-items: center;
`;

const UndoSlot = styled.div`
	margin-left: ${(p) => p.$gap || 43}px;
	margin-right: 14px;
`;

const CustomizeMark = styled.div`
	width: 8px;
	height: 8px;
	margin-left: 36px;
	border-top: 1.5px solid #fff;
	position: relative;
	&::after {
		content: "";
		position: absolute;
		left: 0;
		top: 3px;
		border-left: 4px solid transparent;
		border-right: 4px solid transparent;
		border-top: 4px solid #fff;
	}
`;

const WindowTitle = styled.div`
	position: absolute;
	left: 625px;
	width: 668px;
	font-size: 17.3px;
	letter-spacing: -0.1px;
	white-space: nowrap;
	color: #a9cbb8;
`;

const WindowControls = styled.div`
	margin-left: auto;
	display: flex;
	align-items: center;
	gap: 52px;
	padding-right: 27px;
`;

const TabRow = styled.nav`
	display: flex;
	align-items: stretch;
	height: 36px;
`;

const RibbonTab = styled.div`
	display: flex;
	align-items: center;
	justify-content: center;
	width: ${(p) => p.$w}px;
	font-size: 16.6px;
	letter-spacing: ${(p) => p.$spacing || 0.2}px;
	white-space: nowrap;
	color: ${(p) => (p.$active ? "#217346" : "#fff")};
	background: ${(p) => (p.$active ? "#f1f1f1" : "transparent")};
`;

const TellMe = styled.div`
	display: flex;
	align-items: center;
	gap: 7px;
	margin-left: 5px;
	font-size: 16.7px;
	color: #a9cbb8;
`;

const TabRowEnd = styled.div`
	margin-left: auto;
	display: flex;
	align-items: center;
	gap: 17px;
`;

const ShareButton = styled.div`
	display: flex;
	align-items: center;
	gap: 9px;
	width: 147px;
	height: 100%;
	padding-left: 8px;
	font-size: 16px;
	color: #fff;
	background: #0f5c33;
`;

const Ribbon = styled.section`
	display: flex;
	height: 132px;
	background: #f1f1f1;
	border-bottom: 1px solid #d2d2d2;
`;

const Group = styled.div`
	display: flex;
	flex-direction: column;
	width: ${(p) => p.$w}px;
	height: 123px;
	margin-top: 4px;
	border-right: 1px solid #d0d0d0;
`;

const GroupBody = styled.div`
	display: flex;
	height: 104px;
`;

const GroupLabel = styled.div`
	position: relative;
	height: 19px;
	padding-right: ${(p) => p.$shift || 0}px;
	line-height: 24px;
	text-align: center;
	font-size: 14.5px;
	white-space: nowrap;
	color: #6a6a6a;
`;

const DialogLauncher = styled.span`
	position: absolute;
	right: 4px;
	top: 7px;
	width: 9px;
	height: 9px;
	border-top: 1px solid #888;
	border-left: 1px solid #888;
	&::after {
		content: "";
		position: absolute;
		right: -1px;
		bottom: -1px;
		width: 5px;
		height: 5px;
		border-right: 1.5px solid #666;
		border-bottom: 1.5px solid #666;
	}
`;

const BigButton = styled.div`
	display: flex;
	flex-direction: column;
	align-items: center;
	flex: none;
	width: ${(p) => p.$w}px;
`;

const IconSlot = styled.div`
	display: flex;
	justify-content: center;
	align-items: flex-start;
	height: 53px;
	padding-top: 5px;
`;

const BigLabel = styled.div`
	line-height: 24px;
	font-size: 16.7px;
	text-align: center;
	white-space: nowrap;
	color: #444;
`;

const Caret = styled.span`
	display: ${(p) => (p.$inline ? "inline-block" : "block")};
	flex: none;
	vertical-align: middle;
	width: 0;
	height: 0;
	margin-left: ${(p) => p.$left || 0}px;
	border-left: 4px solid transparent;
	border-right: 4px solid transparent;
	border-top: 4px solid ${(p) => p.$color || "#777"};
`;

const IconStack = styled.div`
	display: flex;
	flex-direction: column;
	width: 44px;
	margin-left: 9px;
`;

const IconStackRow = styled.div`
	display: flex;
	align-items: center;
	gap: 3px;
	height: 31px;
	padding-top: 1px;
`;

const AddinColumn = styled.div`
	display: flex;
	flex-direction: column;
	width: 213px;
	padding: 5px 0 0 10px;
`;

const AddinRow = styled.div`
	display: flex;
	align-items: center;
	gap: 5px;
	height: 44px;
	font-size: 16.8px;
	white-space: nowrap;
	color: #444;
`;

const AddinIcons = styled.div`
	display: flex;
	flex-direction: column;
	gap: 9px;
	padding-top: 6px;
`;

const ChartGrid = styled.div`
	display: grid;
	grid-template-columns: repeat(3, 42.5px);
	grid-auto-rows: 31px;
	width: 127px;
	margin-top: -1px;
	flex: none;
`;

const ChartCell = styled.div`
	display: flex;
	align-items: center;
	gap: 4px;
	padding-left: 2px;
`;

const TextColumn = styled.div`
	display: flex;
	flex-direction: column;
	align-items: center;
	width: 60px;
`;

const TextBoxTile = styled.div`
	display: flex;
	align-items: center;
	justify-content: center;
	width: 46px;
	height: 46px;
	font-family: ${UI};
	font-style: italic;
	font-size: 24px;
	color: ${BLUE};
	background: #fafafa;
	border: 1px solid #c6c6c6;
`;

const TextCaption = styled.div`
	margin: 4px 0 12px;
	line-height: 24px;
	font-size: 16.7px;
	color: #444;
`;

const SymbolColumn = styled.div`
	display: flex;
	flex-direction: column;
	padding: 0 0 0 9px;
`;

const SymbolRow = styled.div`
	display: flex;
	align-items: center;
	gap: 6px;
	height: 31px;
	margin-top: -0.5px;
	font-size: 16.8px;
	color: #444;
`;

const SymbolGlyph = styled.span`
	display: inline-block;
	width: 20px;
	text-align: center;
	font-family: "Liberation Serif", serif;
	font-weight: 700;
	font-size: 30px;
	line-height: 24px;
	color: ${BLUE};
`;

const CollapseRibbon = styled.div`
	display: flex;
	justify-content: center;
	align-items: flex-end;
	flex: 1;
	padding: 0 0 9px 20px;
`;

const FormulaArea = styled.div`
	display: flex;
	height: 65px;
	padding: 15px 3px 15px 7px;
	background: #e6e6e6;
`;

const NameBox = styled.div`
	display: flex;
	align-items: center;
	justify-content: space-between;
	width: 152px;
	padding: 0 10px 0 6px;
	font-size: 18px;
	color: #333;
	background: #fff;
	border: 1px solid #c6c6c6;
`;

const GripDots = styled.div`
	align-self: center;
	width: 4px;
	height: 4px;
	margin: 0 22px 0 19px;
	background: #aaa;
	box-shadow: 0 -6px 0 #aaa, 0 6px 0 #aaa;
`;

const FormulaButtons = styled.div`
	display: flex;
	align-items: center;
	justify-content: space-between;
	width: 164px;
	padding: 0 17px 0 18px;
	background: #fff;
	border: 1px solid #c6c6c6;
`;

const FxMark = styled.span`
	font-family: "Liberation Serif", serif;
	font-style: italic;
	font-weight: 700;
	font-size: 21px;
	color: #666;
`;

const FormulaInput = styled.div`
	display: flex;
	align-items: center;
	justify-content: flex-end;
	flex: 1;
	margin-left: 4px;
	padding-right: 12px;
	background: #fff;
	border: 1px solid #c6c6c6;
`;

const SheetArea = styled.div`
	display: flex;
	height: 659px;
	background: #e6e6e6;
`;

const GridViewport = styled.div`
	position: relative;
	width: 1892px;
	height: 659px;
	overflow: hidden;
	font-family: ${CELL};
	font-size: 9.5px;
	color: #000;
	background: #fff;
	-webkit-text-stroke: 0.12px currentColor;
`;

const GridRow = styled.div`
	display: grid;
	grid-template-columns: 21px 156px 116px 95px 55px 404px repeat(19, 55px);
	grid-template-rows: ${(p) => p.$h}px;
	height: ${(p) => p.$h}px;
`;

const CornerCell = styled.div`
	position: relative;
	background: #e6e6e6;
	border-right: 1px solid #b9b9b9;
	border-bottom: 1px solid #9a9a9a;
	&::after {
		content: "";
		position: absolute;
		right: 3px;
		bottom: 2px;
		border-left: 4px solid transparent;
		border-bottom: 4px solid #b5b5b5;
	}
`;

const ColumnHead = styled.div`
	display: flex;
	align-items: center;
	justify-content: center;
	font-size: 8.5px;
	color: #333;
	background: #e6e6e6;
	border-right: 1px solid #b9b9b9;
	border-bottom: 1px solid #9a9a9a;
`;

// text sits on the bottom of the row; row 4 is a little higher in the picture
const bottomText = css`
	display: flex;
	align-items: flex-end;
	line-height: 10px;
	white-space: nowrap;
	padding-bottom: ${(p) => (p.$lift ? 1.5 : 0)}px;
`;

const RowHead = styled.div`
	${bottomText}
	justify-content: center;
	font-size: 8.8px;
	color: #333;
	background: #e6e6e6;
	border-right: 1px solid #9a9a9a;
	border-bottom: 1px solid #c6c6c6;
`;

const EmptyCell = styled.div`
	border-right: 1px solid #d4d4d4;
	border-bottom: 1px solid #d4d4d4;
`;

const PivotHeadCell = styled.div`
	position: relative;
	display: flex;
	align-items: center;
	padding-left: 3px;
	font-weight: 700;
	font-size: 10px;
	letter-spacing: 0.25px;
	white-space: nowrap;
	background: #d9e7fb;
	border-bottom: 1px solid #8db4e2;
`;

const FilterButton = styled.span`
	position: absolute;
	right: 1px;
	top: 2px;
	width: 11px;
	height: 9px;
	background: #f1f1f1;
	border: 1px solid #b5b5b5;
	&::after {
		content: "";
		position: absolute;
		left: 3px;
		top: 3px;
		border-left: 2px solid transparent;
		border-right: 2px solid transparent;
		border-top: 2px solid #444;
	}
`;

const NameCell = styled.div`
	${bottomText}
	padding-left: 4px;
	overflow: hidden;
`;

const GoalCell = styled.div`
	${bottomText}
	justify-content: flex-end;
	padding-right: 2px;
	letter-spacing: -0.35px;
`;

const RedCell = styled.div`
	${bottomText}
	justify-content: ${(p) => (p.$align === "left" ? "flex-start" : "flex-end")};
	padding-left: 3px;
	padding-right: 2px;
	font-size: 9.3px;
	background: #ff0000;
	border-bottom: 1px solid #7fa8e0;
	-webkit-text-stroke: 0.25px #000;
`;

const NoteCell = styled.div`
	line-height: ${(p) => (p.$wrap ? "12.5px" : "11px")};
	padding-left: 3px;
	padding-top: ${(p) => p.$top || 0}px;
	font-size: 9.05px;
	white-space: nowrap;
	border-bottom: 1px solid #d4d4d4;
	border-right: 1px solid #d4d4d4;
	strong {
		font-weight: 700;
		font-size: 9.9px;
		letter-spacing: 0.27px;
	}
`;

const ChartArea = styled.div`
	position: absolute;
	left: 443px;
	top: 73px;
	width: 1157px;
	height: 586px;
	background: #fff;
	border-left: 2px solid #d6d6d6;
	border-top: 2px solid #dcdcdc;
	border-right: 1px solid #e8e8e8;
	overflow: hidden;
	-webkit-text-stroke: 0;
`;

const ChartFieldButton = styled.div`
	position: absolute;
	left: 6px;
	top: 4px;
	width: 76px;
	height: 12px;
	padding-left: 5px;
	line-height: 12px;
	font-size: 7.5px;
	color: #555;
	background: linear-gradient(#e4e4e4, #a9a9a9);
`;

const VerticalScroll = styled.div`
	display: flex;
	flex-direction: column;
	justify-content: space-between;
	width: 25px;
	height: 659px;
	background: #cdcdcd;
`;

const ScrollButton = styled.div`
	display: flex;
	align-items: center;
	justify-content: center;
	height: 25px;
	background: #fff;
	border: 1px solid #d4d4d4;
`;

const ScrollThumb = styled.div`
	height: 455px;
	margin: 18px 0 137px;
	background: #fff;
	border: 1px solid #b9b9b9;
`;

const ArrowUp = styled.span`
	border-left: 6px solid transparent;
	border-right: 6px solid transparent;
	border-bottom: 6px solid #666;
`;

const ArrowDown = styled.span`
	border-left: 6px solid transparent;
	border-right: 6px solid transparent;
	border-top: 6px solid #666;
`;

const ArrowLeft = styled.span`
	border-top: 6px solid transparent;
	border-bottom: 6px solid transparent;
	border-right: 6px solid #666;
`;

const ArrowRight = styled.span`
	border-top: 6px solid transparent;
	border-bottom: 6px solid transparent;
	border-left: 6px solid #666;
`;

const SheetTabsBar = styled.div`
	display: flex;
	height: 35px;
	background: #e6e6e6;
	border-top: 1px solid #a0a0a0;
	border-bottom: 1px solid #c4c4c4;
`;

const TabNav = styled.div`
	display: flex;
	align-items: center;
	gap: 30px;
	width: 119px;
	padding-left: 30px;
`;

const NavArrow = styled.span`
	border-top: 5px solid transparent;
	border-bottom: 5px solid transparent;
	${(p) => (p.$dir === "left" ? "border-right: 5px solid #c0c0c0;" : "border-left: 5px solid #c0c0c0;")}
`;

const SheetTab = styled.div`
	display: flex;
	align-items: center;
	justify-content: center;
	width: ${(p) => p.$w}px;
	height: 25px;
	margin-top: 4px;
	font-size: 18px;
	color: #444;
	border-left: 1px solid #999;
`;

const ActiveSheetTab = styled.div`
	display: flex;
	align-items: center;
	justify-content: center;
	width: 58px;
	height: 30px;
	font-size: 18px;
	font-weight: 700;
	color: #217346;
	background: #fff;
	border-bottom: 3px solid #217346;
`;

const AddSheet = styled.div`
	display: flex;
	align-items: center;
	margin-left: 42px;
	margin-bottom: 1px;
`;

const TabsGrip = styled.div`
	align-self: center;
	width: 4px;
	height: 4px;
	margin-left: 415px;
	background: #aaa;
	box-shadow: 0 -6px 0 #aaa, 0 6px 0 #aaa;
`;

const HorizontalScroll = styled.div`
	display: flex;
	width: 723px;
	height: 25px;
	margin: 4px 0 0 17px;
	background: #cdcdcd;
`;

const HScrollButton = styled.div`
	display: flex;
	align-items: center;
	justify-content: center;
	width: 25px;
	margin-left: ${(p) => (p.$end ? "31px" : "0")};
	background: #fff;
	border: 1px solid #d4d4d4;
`;

const HScrollThumb = styled.div`
	width: 642px;
	background: #fff;
	border: 1px solid #b9b9b9;
`;

const StatusBar = styled.div`
	display: flex;
	align-items: stretch;
	height: 32px;
	padding-left: 7px;
	background: #f0f0f0;
`;

const StatusText = styled.div`
	align-self: center;
	font-size: 14.5px;
	color: #555;
`;

const StatusRight = styled.div`
	margin-left: auto;
	display: flex;
	align-items: stretch;
`;

const ViewButton = styled.div`
	display: flex;
	align-items: center;
	justify-content: center;
	width: 45px;
	background: ${(p) => (p.$active ? "#c6c6c6" : "transparent")};
`;

const ZoomControl = styled.div`
	display: flex;
	align-items: center;
	width: 197px;
	padding-left: 3px;
`;

const ZoomSign = styled.span`
	width: 16px;
	text-align: center;
	font-family: ${CELL};
	font-weight: 700;
	font-size: 20px;
	color: #666;
`;

const ZoomTrack = styled.div`
	position: relative;
	width: 150px;
	height: 1px;
	margin: 0 4px 0 3px;
	background: #999;
`;

const ZoomThumb = styled.span`
	position: absolute;
	left: 29px;
	top: -8px;
	width: 6px;
	height: 17px;
	background: #666;
`;

const ZoomTick = styled.span`
	position: absolute;
	left: 75px;
	top: -3px;
	width: 1px;
	height: 7px;
	background: #999;
`;

const ZoomValue = styled.div`
	align-self: center;
	width: 50px;
	text-align: center;
	font-size: 14.5px;
	color: #555;
`;

const Taskbar = styled.footer`
	display: flex;
	align-items: stretch;
	height: 72px;
	color: #fff;
	background: #1c2024;
	border-top: 2px solid #3c3f42;
`;

const NotifySlot = styled.div`
	position: relative;
	width: 263px;
	padding: 8px 0 0 15px;
`;

const NotifyBadge = styled.span`
	position: absolute;
	left: 32px;
	top: 9px;
	width: 24px;
	height: 24px;
	line-height: 24px;
	text-align: center;
	border-radius: 50%;
	font-size: 14px;
	color: #fff;
	background: #c42b1c;
`;

const TaskSlot = styled.div`
	position: relative;
	display: flex;
	align-items: center;
	justify-content: center;
	width: 66px;
	padding-bottom: 2px;
	background: ${(p) => (p.$lit ? "#22272b" : "transparent")};
	&::after {
		content: "";
		display: ${(p) => (p.$dot ? "block" : "none")};
		position: absolute;
		left: 50%;
		bottom: 6px;
		width: ${(p) => (p.$wide ? 16 : 8)}px;
		height: 5px;
		margin-left: ${(p) => (p.$wide ? -8 : -4)}px;
		border-radius: 3px;
		background: #8e8e8e;
	}
`;

const ChromeWrap = styled.div`
	margin-left: 11px;
`;

const SearchPill = styled.div`
	display: flex;
	align-items: center;
	width: 325px;
	height: 44px;
	margin: 12px 6px 0 6px;
	padding: 0 10px 0 15px;
	border-radius: 22px;
	color: #555;
	background: #f0f0f0;
`;

const SearchText = styled.span`
	flex: 1;
	margin-left: 15px;
	font-size: 18.5px;
`;

const CopilotWrap = styled.div`
	position: relative;
	width: 35px;
	height: 35px;
`;

const PreBadge = styled.span`
	position: absolute;
	left: 8px;
	bottom: -3px;
	padding: 0 3px;
	border-radius: 2px;
	line-height: 12px;
	font-size: 9.5px;
	font-weight: 700;
	color: #222;
	background: #ffc000;
`;

const SystemTray = styled.div`
	display: flex;
	align-items: center;
	margin-left: auto;
	padding-right: 19px;
`;

const TrayIcon = styled.div`
	display: flex;
	align-items: center;
	justify-content: center;
	width: ${(p) => p.$w}px;
`;

const LangBlock = styled.div`
	width: 54px;
	margin-right: 11px;
	text-align: center;
	font-size: 17px;
	line-height: 24px;
`;

const ClockBlock = styled.div`
	width: 100px;
	text-align: right;
	font-size: 17.3px;
	line-height: 23px;
`;

const ActivateNote = styled.div`
	position: absolute;
	left: 1498px;
	top: 892px;
	pointer-events: none;
	white-space: nowrap;
	color: rgba(110, 110, 110, 0.5);
`;

const ActivateTitle = styled.div`
	font-size: 28.8px;
	line-height: 40px;
`;

const ActivateHint = styled.div`
	font-size: 21px;
	line-height: 28px;
	margin-top: 2px;
`;

export default App;
